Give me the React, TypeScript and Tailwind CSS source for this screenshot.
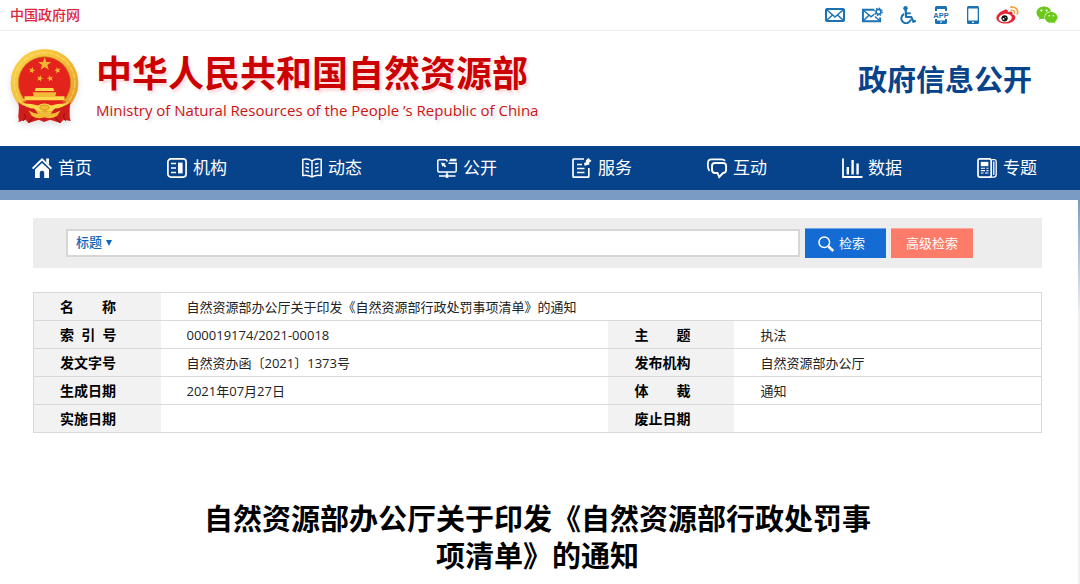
import React, { useState } from 'react';
import { FaWeixin } from 'react-icons/fa';

const STAR = 'M0 -1 L0.235 -0.324 L0.951 -0.309 L0.38 0.124 L0.588 0.809 L0 0.4 L-0.588 0.809 L-0.38 0.124 L-0.951 -0.309 L-0.235 -0.324 Z';

const Emblem: React.FC = () => (
    <svg viewBox="0 0 68 74" className="w-[70px] h-[76px] shrink-0 drop-shadow-md" aria-hidden="true">
        <defs>
            <linearGradient id="gold" x1="0" y1="0" x2="1" y2="1">
                <stop offset="0" stopColor="#fbd84c" />
                <stop offset="0.5" stopColor="#f3bb35" />
                <stop offset="1" stopColor="#dd9420" />
            </linearGradient>
        </defs>
        {/* Ribbons */}
        <path d="M9 51 L8 66 Q9 69 8 71 L15 69 L18 72 L28 69 L33 71 L39 69 L49 72 L52 69 L59 70 L58 66 L58 51 Z" fill="#cf1d1c" />
        <path d="M11 56 L15 66 L13 70 M55 56 L52 66 L54 70 M19 60 L23 66 L18 72 M47 60 L43 66 L49 72" stroke="#9b1010" strokeWidth="1" fill="none" />
        {/* Wreath and disc */}
        <circle cx="33.5" cy="33" r="33" fill="url(#gold)" />
        <circle cx="33.5" cy="33" r="29.5" fill="none" stroke="#fce184" strokeWidth="1.2" strokeDasharray="5 1.5" opacity="0.6" />
        <circle cx="33.5" cy="33" r="25.5" fill="#e3231c" stroke="#c98a22" strokeWidth="0.8" />
        <path d={STAR} transform="translate(33.7 14.8) scale(6.8)" fill="#f2b632" />
        <path d={STAR} transform="translate(21.3 20.8) rotate(15) scale(3.4)" fill="#f2b632" />
        <path d={STAR} transform="translate(46.2 20.8) rotate(-15) scale(3.4)" fill="#f2b632" />
        <path d={STAR} transform="translate(29 28.7) rotate(15) scale(3.4)" fill="#f2b632" />
        <path d={STAR} transform="translate(39 28.7) rotate(-15) scale(3.4)" fill="#f2b632" />
        {/* Gate */}
        <path d="M25 38 H42 L43 41 H24 Z" fill="#fbd84c" />
        <path d="M22 42 H45 L44 46 H23 Z" fill="#f3bb35" />
        <path d="M14 46 H53 L53 50 H14 Z" fill="#fbd84c" />
        <path d="M12 51 H55 Q46 58 33.5 58 Q21 58 12 51 Z" fill="#e3231c" />
        {/* Gear and knots */}
        <path d="M8 52 Q15 57 23 57 L28 64 L39 64 L44 57 Q52 57 59 52 L57 60 Q46 69 33.5 69 Q21 69 9 60 Z" fill="#cf1d1c" />
        <path d="M12 53 Q22 53 27 55 Q33.5 51 40 55 Q45 53 55 53 Q50 58 44 58 Q38 63 33.5 59.5 Q29 63 23 58 Q17 58 12 53 Z" fill="#fbd84c" />
        <path d="M18 60 Q26 65 33.5 61.5 Q41 65 49 60 L46 65 Q39 69 33.5 66.5 Q27 69 21 65 Z" fill="#f3bb35" />
        <ellipse cx="33.5" cy="57" rx="4.5" ry="2.4" fill="#f3bb35" stroke="#c97a14" strokeWidth="0.6" />
    </svg>
);

const MailIcon = () => (
    <svg viewBox="0 0 20 14" className="w-5 h-3.5" fill="none" stroke="#1a72b5" strokeWidth="2">
        <rect x="1" y="1" width="18" height="12" rx="1" />
        <path d="M2 2 L10 9 L18 2 M2 12 L7.5 7 M18 12 L12.5 7" strokeWidth="1.5" />
    </svg>
);

const MailGearIcon = () => (
    <svg viewBox="0 0 22 16" className="w-[21px] h-4" fill="none" stroke="#1a72b5">
        <path d="M13 2.5 H1 V14.5 H19 V10.5" strokeWidth="2" />
        <path d="M2 3.5 L9.5 10 L13 7 M2 13.5 L7 8.5 M18 13.5 L13.5 9.5" strokeWidth="1.5" />
        <circle cx="17.3" cy="4.7" r="2.6" strokeWidth="1.7" />
        <circle cx="17.3" cy="4.7" r="3.9" strokeWidth="1.2" strokeDasharray="1.5 1.56" />
    </svg>
);

const WheelchairIcon = () => (
    <svg viewBox="0 0 16 18" className="w-4 h-[18px]" fill="none" stroke="#1a72b5" strokeWidth="2">
        <circle cx="5.5" cy="2.2" r="2.2" fill="#1a72b5" stroke="none" />
        <path d="M5.6 3.5 L6.2 11 H11.3 L13.3 15.6 L15.8 14.8" strokeWidth="2.2" />
        <path d="M6 7.3 H10.8" strokeWidth="1.8" />
        <path d="M4.2 8 A4.8 4.8 0 1 0 10.8 13.5" />
    </svg>
);

const AppIcon = () => (
    <svg viewBox="0 0 16 18" className="w-4 h-[18px] overflow-visible">
        <path d="M2 5 V1.5 Q2 0 3.5 0 H12.5 Q14 0 14 1.5 V5 H12 V3 H4 V5 Z M2 13 V16.5 Q2 18 3.5 18 H12.5 Q14 18 14 16.5 V13 H12 V14.5 H4 V13 Z" fill="#1a72b5" />
        <rect x="7" y="15.5" width="2" height="1" fill="#fff" />
        <text x="8" y="11.8" textAnchor="middle" fontSize="7.5" fontWeight="700" fontFamily="Liberation Sans, sans-serif" fill="#1a72b5">APP</text>
    </svg>
);

const PhoneIcon = () => (
    <svg viewBox="0 0 13 18" className="w-[13px] h-[18px]">
        <rect x="1" y="0" width="12" height="18" rx="1.5" fill="#1a72b5" />
        <rect x="2.3" y="2.5" width="9.4" height="12" fill="#fff" />
        <rect x="6" y="15.7" width="2" height="1.2" fill="#fff" />
    </svg>
);

const WeiboIcon = () => (
    <svg viewBox="0 0 23 18" className="w-[23px] h-[18px]">
        <path d="M8.5 4 C11 3 12.4 4 11.8 6.2 C15 5 17.2 5.6 16.4 8.3 C19 9 20 10.6 19.2 12.6 C18 16 13.5 17.8 9 17.6 C4 17.4 0.3 15 0.4 11.8 C0.6 8.6 5 5 8.5 4 Z" fill="#e32631" />
        <ellipse cx="9.3" cy="12" rx="6.6" ry="4.2" transform="rotate(-8 9.3 12)" fill="#fff" />
        <circle cx="8.6" cy="12.3" r="3.1" fill="#111" />
        <circle cx="7.6" cy="12.9" r="0.9" fill="#fff" />
        <circle cx="9.7" cy="11.4" r="0.5" fill="#fff" />
        <path d="M14.8 1.2 C19.5 0.3 22.7 3.5 21.3 8" fill="none" stroke="#f7a13a" strokeWidth="1.7" strokeLinecap="round" />
        <path d="M15.2 4.2 C17.6 3.8 19.1 5.2 18.4 7.3" fill="none" stroke="#f7a13a" strokeWidth="1.4" strokeLinecap="round" />
    </svg>
);

const HomeIcon = () => (
    <>
        <path d="M0.6 10.6 L10 1.4 L19.4 10.6" strokeWidth="2" />
        <path d="M14.2 0.5 H17 V7 L14.2 4.2 Z" fill="#fff" stroke="none" />
        <path d="M10 5 L17 11.6 V20 H12.2 V14.5 Q12.2 12.8 10 12.8 Q7.8 12.8 7.8 14.5 V20 H3 V11.6 Z" fill="#fff" stroke="none" />
    </>
);

const OrgIcon = () => (
    <>
        <rect x="0.9" y="0.9" width="18.2" height="18.2" rx="3" />
        <path d="M4 5.5 H9 M4 10 H9 M4 14.5 H9" />
        <rect x="11" y="4.6" width="4.6" height="10.8" fill="#fff" stroke="none" />
    </>
);

const BookIcon = () => (
    <>
        <path d="M10 3 C7.5 1 4 0.8 0.8 1.4 V17.4 C4.5 16.8 7.5 17.2 10 19 C12.5 17.2 15.5 16.8 19.2 17.4 V1.4 C16 0.8 12.5 1 10 3 Z M10 3 V19" strokeWidth="1.5" />
        <path d="M3.5 5.5 L7 6.3 M3.5 9.2 L7 10 M3.5 13 L7 13.8 M16.5 5.5 L13 6.3 M16.5 9.2 L13 10 M16.5 13 L13 13.8" strokeWidth="1.4" />
    </>
);

const OpenIcon = () => (
    <>
        <path d="M10.5 3.5 L9 1.8 H2 Q0.8 1.8 0.8 3 V12.5 Q0.8 14 2 14 H18 Q19.2 14 19.2 12.5 V5.2 H11.5" strokeWidth="1.5" />
        <path d="M12 3.2 L13.5 0.8 H19.5 V3.2 Z" fill="#fff" stroke="none" />
        <path d="M4 4.6 L8.5 5.6 L7.6 6.5 L9.3 8.2 L8 9.4 L6.4 7.8 L5.4 8.8 Z" fill="#fff" stroke="none" />
        <path d="M10 14 V18 M2 18 H8 M12 18 H18.5" strokeWidth="1.4" />
        <circle cx="10" cy="18" r="1.9" fill="#fff" stroke="none" />
    </>
);

const ServiceIcon = () => (
    <>
        <path d="M12 1 H1.8 Q1 1 1 1.8 V18.2 Q1 19.2 1.8 19.2 H16 Q16.8 19.2 16.8 18.2 V10" />
        <path d="M5 6.5 H10 M5 10.5 H12.5 M5 14.5 H12.5" strokeWidth="1.6" />
        <path d="M16.2 0 L19.6 3 L17.2 4.4 L17.4 6.4 L12.6 7.8 L12 5 L13.8 4.4 L14 2.2 Z" fill="#fff" stroke="none" />
    </>
);

const ChatIcon = () => (
    <>
        <path d="M2.5 13 Q0.9 11 0.9 8 V5 Q0.9 1.3 4.6 1.3 H14.5 Q17 1.3 18 2.8" />
        <path d="M8 5 H16 Q19.1 5 19.1 8 V11.8 Q19.1 15 16 15 L12.2 19 L10.5 15 H8 Q5 15 5 11.8 V8 Q5 5 8 5 Z" strokeWidth="1.9" />
    </>
);

const DataIcon = () => (
    <>
        <path d="M1 0.5 V19 H20.5" strokeWidth="1.8" />
        <path d="M5.8 9 V16.5 M10.6 2 V16.5 M15.6 5.5 V16.5" strokeWidth="2.4" />
    </>
);

const TopicIcon = () => (
    <>
        <rect x="1" y="0.9" width="13.2" height="18.2" rx="1.8" />
        <rect x="3.8" y="3.8" width="7.6" height="4.4" fill="#fff" stroke="none" />
        <path d="M3.8 10.2 H8 M3.8 12.6 H8 M3.8 15 H6.5 M9.4 10.2 H11.5 M9.4 12.6 H11.5 M8 15 H11.5" strokeWidth="1.1" />
        <path d="M15 1.6 H17.5 Q19.2 1.6 19.2 3.5 V16.5 Q19.2 19.1 16.8 19.1 H13 M16.8 3.5 V17" strokeWidth="1.3" />
    </>
);

const navItems = [
    { label: '首页', icon: HomeIcon },
    { label: '机构', icon: OrgIcon },
    { label: '动态', icon: BookIcon },
    { label: '公开', icon: OpenIcon },
    { label: '服务', icon: ServiceIcon },
    { label: '互动', icon: ChatIcon },
    { label: '数据', icon: DataIcon },
    { label: '专题', icon: TopicIcon },
];

const quickLinks = [
    { label: '邮箱', node: <MailIcon /> },
    { label: '邮件设置', node: <MailGearIcon /> },
    { label: '无障碍', node: <WheelchairIcon /> },
    { label: '客户端', node: <AppIcon /> },
    { label: '手机版', node: <PhoneIcon /> },
    { label: '微博', node: <WeiboIcon /> },
    { label: '微信', node: <FaWeixin className="w-[22px] h-[22px] text-[#6cc91c]" /> },
];

const rows = [
    ['索  引  号', '000019174/2021-00018', '主　　题', '执法'],
    ['发文字号', '自然资办函〔2021〕1373号', '发布机构', '自然资源部办公厅'],
    ['生成日期', '2021年07月27日', '体　　裁', '通知'],
    ['实施日期', '', '废止日期', ''],
];

const labelCell = 'bg-[#f2f2f2] pl-[26px] text-left text-sm leading-[26px] font-bold whitespace-pre';
const valueCell = 'pl-[26px] pt-px text-[13px] leading-[26px] text-[#222]';

const App: React.FC = () => {
    const [field, setField] = useState('标题');
    const [keyword, setKeyword] = useState('');

    return (
        <div className="min-h-screen flex flex-col bg-white text-black font-['Open_Sans','Noto_Sans_CJK_SC',sans-serif]">
            {/* Top bar */}
            <div className="h-[31px] pl-2.5 pr-[22px] flex items-center justify-between border-b border-[#ececec]">
                <a href="#" className="text-sm font-medium text-[#e0243c]">中国政府网</a>
                <div className="flex items-center gap-[17px]">
                    {quickLinks.map((link) => (
                        <a key={link.label} href="#" aria-label={link.label}>
                            {link.node}
                        </a>
                    ))}
                </div>
            </div>

            {/* Masthead */}
            <header className="h-[115px] pl-2.5 pr-12 pb-1 flex items-center justify-between">
                <a href="#" className="flex items-center gap-4">
                    <Emblem />
                    <span className="flex flex-col gap-1.5">
                        <span className="text-4xl leading-10 font-bold text-[#cc0000] [text-shadow:2px_3px_3px_#fbdcdc]">
                            中华人民共和国自然资源部
                        </span>
                        <span className="text-[15px] leading-5 text-[#cc1414] [text-shadow:2px_3px_3px_#dddddd]">
                            Ministry of Natural Resources of the People ’s Republic of China
                        </span>
                    </span>
                </a>
                <span className="pb-3.5 text-[29px] leading-10 font-bold text-[#07438a]">政府信息公开</span>
            </header>

            {/* Main navigation */}
            <nav className="grid grid-cols-8 bg-[#07438a] border-b-10 border-[#7a9bc3]">
                {navItems.map((item) => (
                    <a key={item.label} href="#" className="h-11 pl-8 flex items-center gap-1.5 text-[17px] text-white">
                        <svg viewBox="0 0 20 20" className="w-5 h-5 overflow-visible" fill="none" stroke="#fff" strokeWidth="1.7">
                            <item.icon />
                        </svg>
                        {item.label}
                    </a>
                ))}
            </nav>

            <div className="grow flex flex-col pr-0.5 bg-linear-to-b from-[#7a9bc3] to-[#f0f0f0] to-30%">
                <main className="grow bg-white pl-[33px] pr-9 pt-[18px] pb-2">
                    {/* Search */}
                    <form
                        className="h-[50px] pl-[33px] pr-[69px] flex items-center gap-[5px] bg-[#ededed]"
                        onSubmit={(e) => e.preventDefault()}
                    >
                        <div className="flex-1 h-7 flex items-center border-2 border-[#d6d6d6] bg-white">
                            <label className="relative pl-2 flex items-center text-[13px] font-medium text-[#0f67b5]">
                                <select
                                    aria-label="检索范围"
                                    value={field}
                                    onChange={(e) => setField(e.target.value)}
                                    className="appearance-none w-10 outline-none"
                                >
                                    <option>标题</option>
                                    <option>正文</option>
                                </select>
                                <svg viewBox="0 0 6 6" className="absolute right-1 w-1.5 h-1.5 pointer-events-none">
                                    <path d="M0 0 H6 L3 6 Z" fill="#0f67b5" />
                                </svg>
                            </label>
                            <input
                                type="text"
                                aria-label="关键词"
                                value={keyword}
                                onChange={(e) => setKeyword(e.target.value)}
                                className="flex-1 px-2 text-[13px] outline-none"
                            />
                        </div>
                        <button type="submit" className="w-[81px] h-[30px] pl-3 flex items-center gap-1 bg-[#136bd3] border-t border-[#6fa3e2] text-[13px] text-white">
                            <svg viewBox="0 0 18 18" className="w-[18px] h-[18px]" fill="none" stroke="#fff">
                                <circle cx="7.3" cy="7.3" r="5.3" strokeWidth="1.5" />
                                <path d="M11.5 11.5 L16.3 16" strokeWidth="2.6" />
                            </svg>
                            检索
                        </button>
                        <button type="button" className="w-[82px] h-[30px] bg-[#fd7b69] border-t border-[#fba89c] text-[13px] text-white">
                            高级检索
                        </button>
                    </form>

                    {/* Document record */}
                    <table className="mt-6 w-full table-fixed border-collapse border border-[#d9d9d9]">
                        <colgroup>
                            <col className="w-[127px]" />
                            <col />
                            <col className="w-[126px]" />
                            <col className="w-[307px]" />
                        </colgroup>
                        <tbody>
                            <tr className="border-b border-[#d9d9d9]">
                                <th scope="row" className={labelCell}>名　　称</th>
                                <td colSpan={3} className={valueCell}>
                                    自然资源部办公厅关于印发《自然资源部行政处罚事项清单》的通知
                                </td>
                            </tr>
                            {rows.map(([label, value, label2, value2]) => (
                                <tr key={label} className="h-7 border-b border-[#d9d9d9]">
                                    <th scope="row" className={labelCell}>{label}</th>
                                    <td className={valueCell}>{value}</td>
                                    <th scope="row" className={labelCell}>{label2}</th>
                                    <td className={valueCell}>{value2}</td>
                                </tr>
                            ))}
                        </tbody>
                    </table>

                    <h1 className="mx-auto mt-[67px] max-w-[680px] text-center text-[29px] leading-[37px] font-bold">
                        自然资源部办公厅关于印发《自然资源部行政处罚事项清单》的通知
                    </h1>
                </main>
            </div>
        </div>
    );
};

export default App;
